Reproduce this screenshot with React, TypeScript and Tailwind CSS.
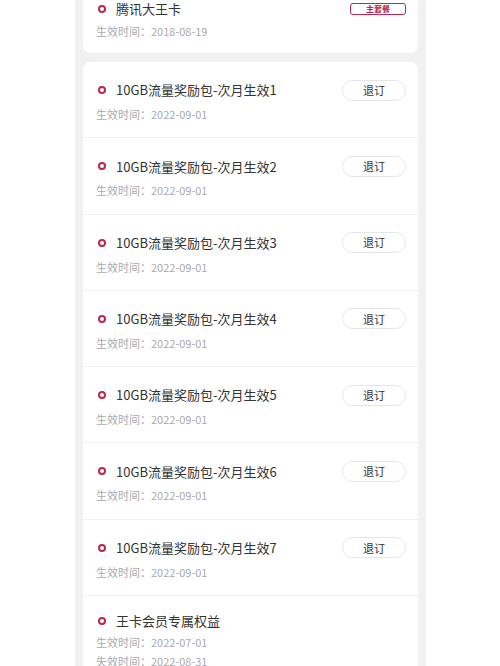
const packs = [1, 2, 3, 4, 5, 6, 7].map((n) => ({
  id: n,
  title: `10GB流量奖励包-次月生效${n}`,
  start: "2022-09-01",
}));

function Ring() {
  return <span className="ml-[2px] mr-[10px] inline-block h-[8px] w-[8px] shrink-0 rounded-full border-2 border-[#b8284f]" />;
}

export default function App() {
  return (
    <div
      className="h-[666px] w-[500px] overflow-hidden bg-white"
      style={{ fontFamily: '"Noto Sans CJK SC", "Noto Sans", sans-serif' }}
    >
      <div className="ml-[75px] flex min-h-[700px] w-[351px] flex-col gap-[9px] bg-[#f1f1f1] px-[8px]">
        {/* main plan card, scrolled past its top */}
        <div className="-mt-[19px] rounded-lg bg-white px-[13px] pb-[14px] pt-[17px]">
          <div className="flex h-[22px] items-center">
            <Ring />
            <span className="text-[13px] text-[#333]">腾讯大王卡</span>
            <span className="ml-auto mr-[-1px] flex h-[12px] w-[56px] items-center justify-center rounded-[3px] border border-[#b8284f] text-[8px] font-bold leading-none text-[#b8284f]">
              主套餐
            </span>
          </div>
          <p className="mt-[3px] h-[16px] text-[11px] leading-[16px] text-[#aaa]">生效时间：2018-08-19</p>
        </div>

        {/* add-on packs */}
        <div className="rounded-lg bg-white">
          {packs.map((p) => (
            <div key={p.id} className="border-b border-[#f0f0f0] px-[13px] pb-[15.3px] pt-[17px]">
              <div className="flex h-[22px] items-center">
                <Ring />
                <span className="text-[13px] text-[#333]">{p.title}</span>
                <button className="ml-auto mr-[-1px] flex h-[21px] w-[64px] items-center justify-center rounded-full border border-[#e6e6e6] text-[11px] text-[#333]">
                  退订
                </button>
              </div>
              <p className="mt-[5px] h-[16px] text-[11px] leading-[16px] text-[#aaa]">生效时间：{p.start}</p>
            </div>
          ))}
          <div className="px-[13px] pb-[16px] pt-[14px]">
            <div className="flex h-[22px] items-center">
              <Ring />
              <span className="text-[13px] text-[#333]">王卡会员专属权益</span>
            </div>
            <p className="mt-[2px] h-[16px] text-[11px] leading-[16px] text-[#aaa]">生效时间：2022-07-01</p>
            <p className="mt-[3px] h-[16px] text-[11px] leading-[16px] text-[#aaa]">失效时间：2022-08-31</p>
          </div>
        </div>
      </div>
    </div>
  );
}
